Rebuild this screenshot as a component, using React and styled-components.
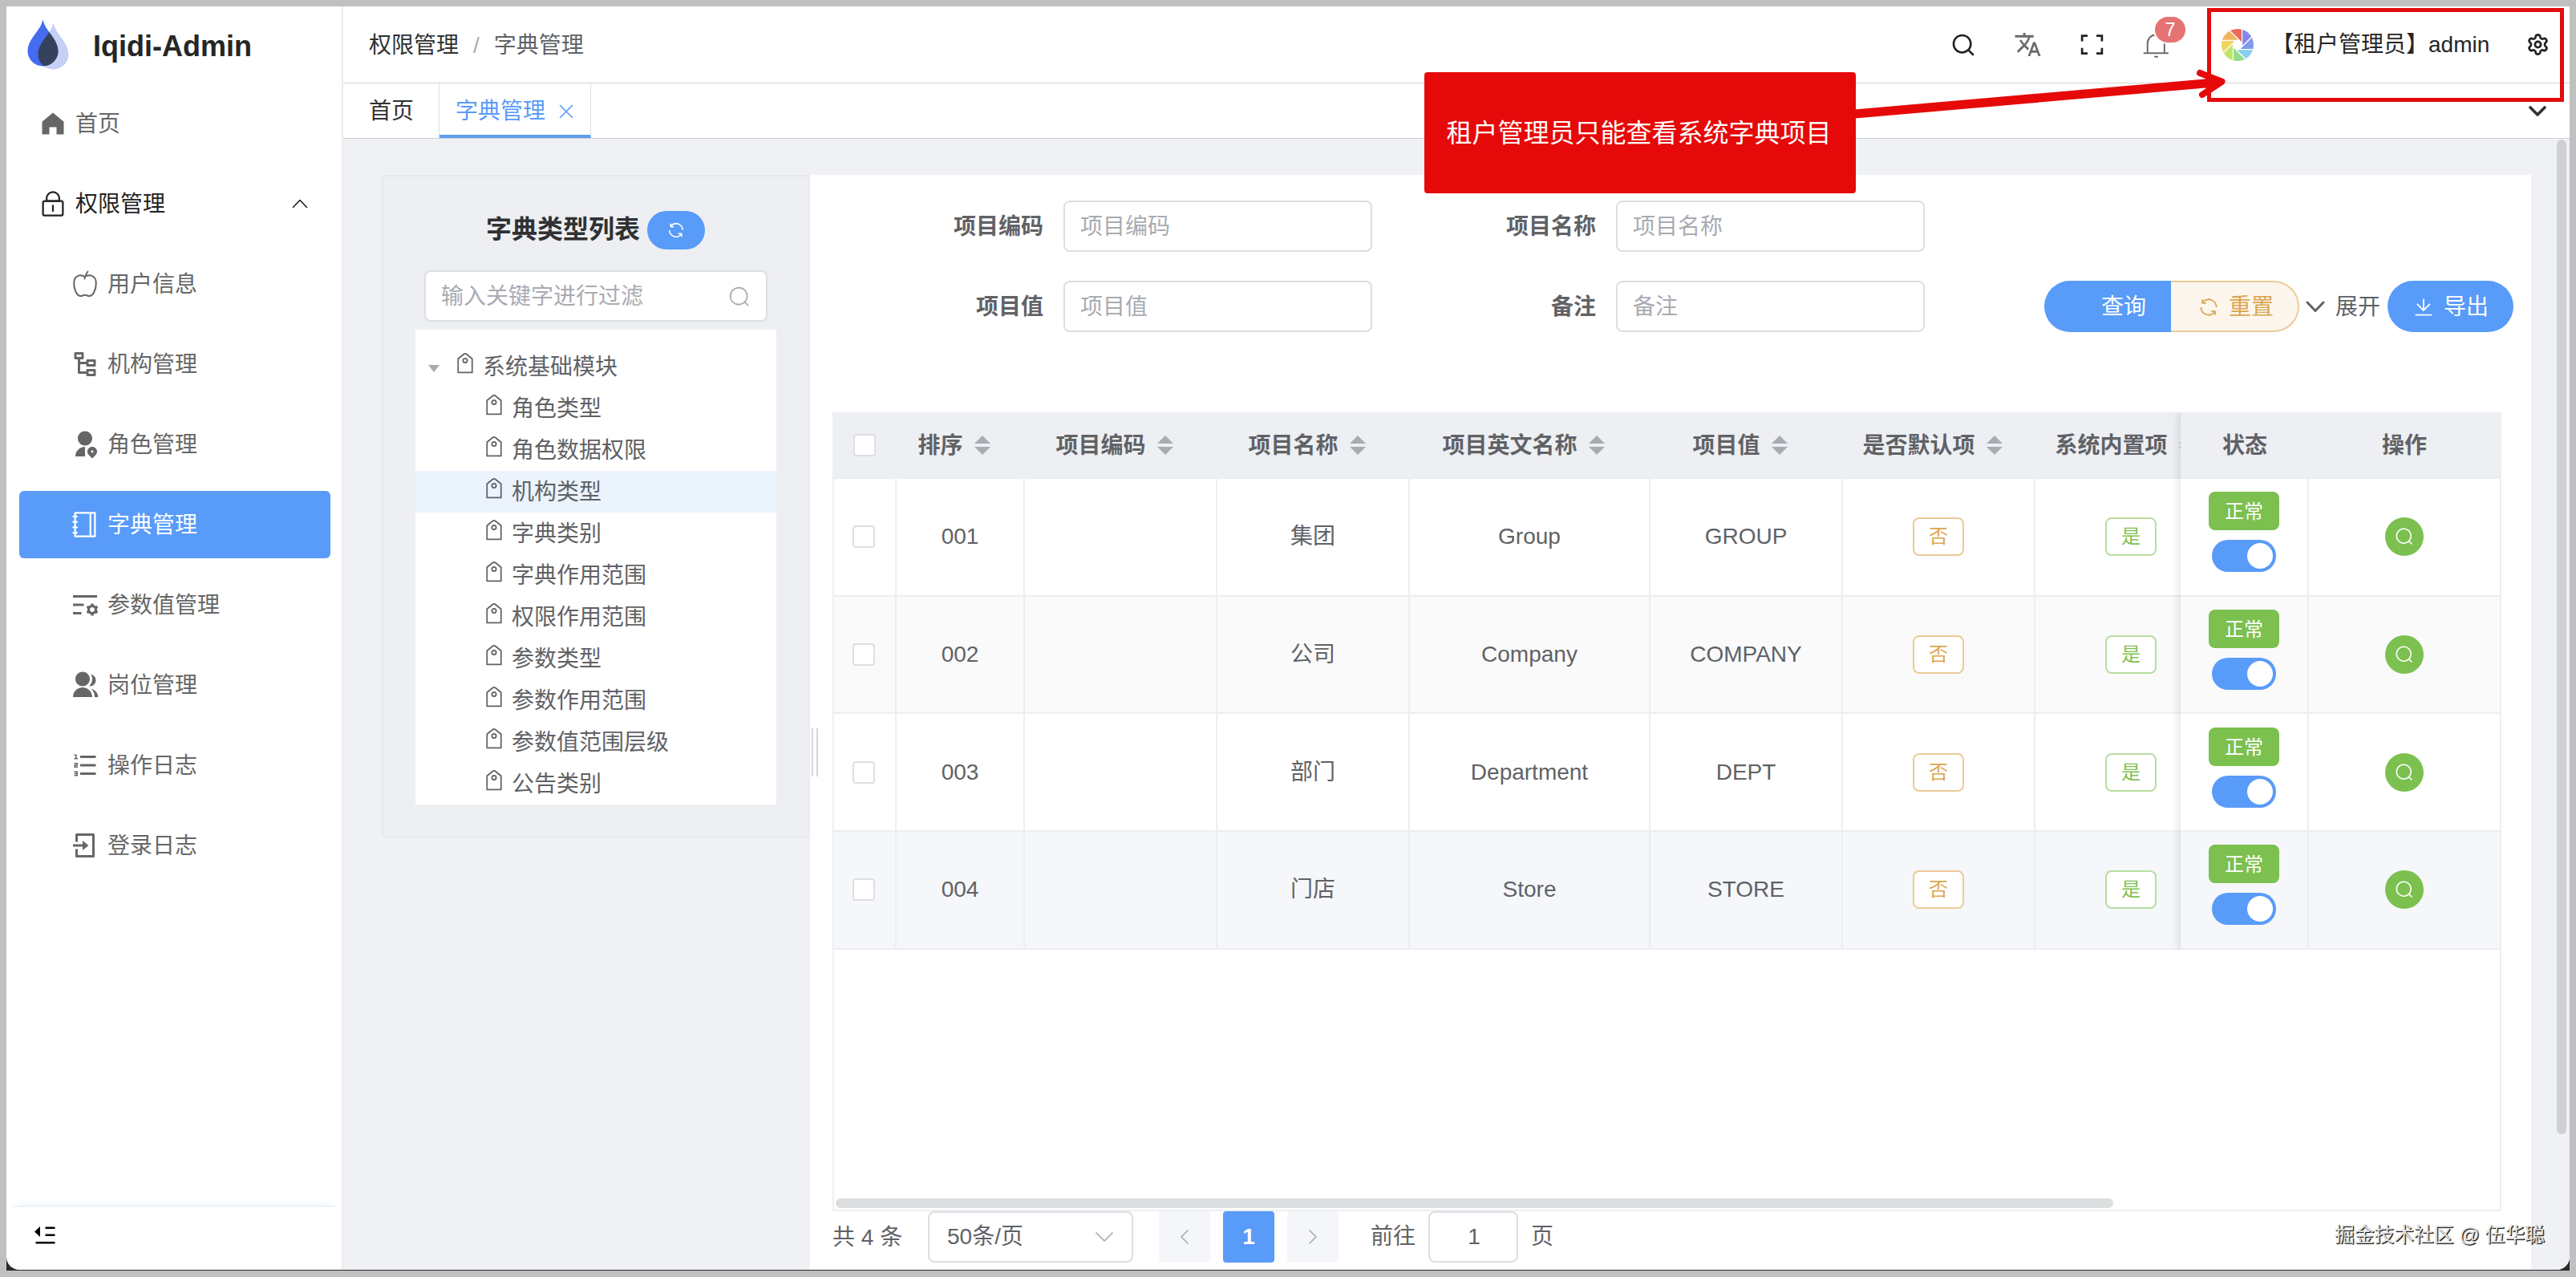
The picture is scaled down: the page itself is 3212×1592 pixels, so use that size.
import React from "react";
import styled, { createGlobalStyle, css } from "styled-components";
import {
  RiNodeTree,
  RiUserLocationFill,
  RiListSettingsLine,
  RiGroupFill,
  RiListOrdered,
  RiLoginBoxLine,
  RiSearchLine,
  RiFullscreenLine,
} from "react-icons/ri";
import { MdTranslate } from "react-icons/md";
import { Settings } from "lucide-react";

const GlobalStyle = createGlobalStyle`
  * {
    box-sizing: border-box;
  }
  body {
    margin: 0;
    background: #c0c0c0;
    color: #606266;
    font-family: "Liberation Sans", "Noto Sans CJK SC", sans-serif;
    font-size: 28px;
    line-height: 1;
  }
`;

/* ---------- icons ---------- */

const EP_PATHS = {
  home: ["M512 128 128 447.936V896h255.936V640H640v256h255.936V447.936z"],
  lock: [
    "M224 448a32 32 0 0 0-32 32v384a32 32 0 0 0 32 32h576a32 32 0 0 0 32-32V480a32 32 0 0 0-32-32zm0-64h576a96 96 0 0 1 96 96v384a96 96 0 0 1-96 96H224a96 96 0 0 1-96-96V480a96 96 0 0 1 96-96",
    "M512 544a32 32 0 0 1 32 32v192a32 32 0 1 1-64 0V576a32 32 0 0 1 32-32m192-160v-64a192 192 0 1 0-384 0v64zM512 64a256 256 0 0 1 256 256v128H256V320A256 256 0 0 1 512 64",
  ],
  notebook: [
    "M192 128v768h640V128zm-32-64h704a32 32 0 0 1 32 32v832a32 32 0 0 1-32 32H160a32 32 0 0 1-32-32V96a32 32 0 0 1 32-32",
    "M672 128h64v768h-64zM96 192h128q32 0 32 32t-32 32H96q-32 0-32-32t32-32m0 192h128q32 0 32 32t-32 32H96q-32 0-32-32t32-32m0 192h128q32 0 32 32t-32 32H96q-32 0-32-32t32-32m0 192h128q32 0 32 32t-32 32H96q-32 0-32-32t32-32",
  ],
  search: [
    "m795.904 750.72 124.992 124.928a32 32 0 0 1-45.248 45.248L750.656 795.904a416 416 0 1 1 45.248-45.248zM480 832a352 352 0 1 0 0-704 352 352 0 0 0 0 704",
  ],
  refresh: [
    "M771.776 794.88A384 384 0 0 1 128 512h64a320 320 0 0 0 555.712 216.448H654.72a32 32 0 1 1 0-64h149.056a32 32 0 0 1 32 32v148.928a32 32 0 1 1-64 0v-50.56zM276.288 295.616h92.992a32 32 0 0 1 0 64H220.16a32 32 0 0 1-32-32V178.56a32 32 0 0 1 64 0v50.56A384 384 0 0 1 896.128 512h-64a320 320 0 0 0-555.776-216.384z",
  ],
  download: [
    "M160 832h704a32 32 0 1 1 0 64H160a32 32 0 1 1 0-64m384-253.696 236.288-236.352 45.248 45.248L508.8 704 192 387.2l45.248-45.248L480 584.704V128h64z",
  ],
  tag: [
    "M224 318.336V896h576V318.336L552.512 115.84a64 64 0 0 0-81.024 0zM593.024 66.304l259.2 212.096A32 32 0 0 1 864 303.168V928a32 32 0 0 1-32 32H192a32 32 0 0 1-32-32V303.168a32 32 0 0 1 11.712-24.768l259.2-212.096a128 128 0 0 1 162.112 0",
    "M512 448a64 64 0 1 0 0-128 64 64 0 0 0 0 128m0 64a128 128 0 1 1 0-256 128 128 0 0 1 0 256",
  ],
};

const IconSvg = styled.svg`
  display: block;
  flex: none;
`;

function EpIcon({ name, size }) {
  return (
    <IconSvg viewBox="0 0 1024 1024" width={size} height={size} fill="currentColor">
      {EP_PATHS[name].map((d) => (
        <path key={d} d={d} fillRule="evenodd" />
      ))}
    </IconSvg>
  );
}

function LineIcon({ d, width, height, stroke = 2 }) {
  return (
    <IconSvg
      viewBox={`0 0 ${width} ${height}`}
      width={width}
      height={height}
      fill="none"
      stroke="currentColor"
      strokeWidth={stroke}
      strokeLinecap="round"
      strokeLinejoin="round"
    >
      <path d={d} />
    </IconSvg>
  );
}

const AppleIcon = () => (
  <LineIcon
    width={36}
    height={36}
    d="M17.5 9C13 5.500 4.500 7 4.200 16.500C4 25 8 32.400 12 33C14.500 33.300 15.500 31.800 18 31.800S21.500 33.300 24 33C28 32.400 32 25 31.800 16.500C31.500 7 23 5.500 17.500 9ZM17.500 11.500C18 8.500 19.500 5 21.500 2.500"
  />
);

const BellIcon = () => (
  <LineIcon
    width={36}
    height={36}
    d="M3.500 28.200H33M7.700 28V16.500C7.700 10 12 5.500 18 5.500S28.800 10 28.800 16.500V28M17 32.700H20"
  />
);

const DROP = "M0 0C2 14 19 24 19 40C19 50 10.500 58.500 0 58.500S-19 50-19 40C-19 24-2 14 0 0Z";

function BrandLogo() {
  return (
    <IconSvg viewBox="0 0 52 66" width="52" height="66">
      <clipPath id="drop-front">
        <path d={DROP} transform="translate(19.500 1)" />
      </clipPath>
      <path d={DROP} transform="translate(32.500 5)" fill="#c6cff4" />
      <path d={DROP} transform="translate(19.500 1)" fill="#446bf0" />
      <g clipPath="url(#drop-front)">
        <path d={DROP} transform="translate(32.500 5)" fill="#35425c" />
      </g>
    </IconSvg>
  );
}

const BLADES = ["#ec6a5e", "#8a84ee", "#7c9cea", "#84cff2", "#96db8c", "#bce56a", "#f0d45c", "#f1b45f"];

function ApertureLogo() {
  return (
    <IconSvg viewBox="-20 -20 40 40" width="40" height="40">
      <clipPath id="aperture">
        <circle r="20" />
      </clipPath>
      <g clipPath="url(#aperture)">
        {BLADES.map((color, i) => (
          <path
            key={color}
            d="M5.600 -2.300V-30H-22.100Z"
            transform={`rotate(${i * 45})`}
            fill={color}
            stroke="#fff"
            strokeWidth="1.200"
          />
        ))}
      </g>
    </IconSvg>
  );
}

/* ---------- window and sidebar ---------- */

const Screen = styled.div`
  position: relative;
  width: 3212px;
  height: 1592px;
  padding: 8px;
  overflow: hidden;
`;

const Backdrop = styled.div`
  height: 1576px;
  background: #2a2a2c;
`;

const Window = styled.div`
  display: flex;
  height: 1575px;
  border-radius: 0 0 16px 16px;
  background: #fff;
  overflow: hidden;
`;

const Sidebar = styled.aside`
  display: flex;
  flex-direction: column;
  width: 420px;
  flex: none;
  border-right: 2px solid #ebecef;
`;

const Brand = styled.div`
  display: flex;
  align-items: flex-start;
  height: 104px;
  padding: 15px 0 0 26px;
`;

const BrandName = styled.h1`
  margin: 17px 0 0 30px;
  font-size: 36px;
  line-height: 36px;
  font-weight: 700;
  color: #262626;
`;

const Menu = styled.nav`
  display: flex;
  flex-direction: column;
  gap: 16px;
  padding: 0 14px 0 16px;
  flex: 1;
`;

const MenuItem = styled.a`
  display: flex;
  align-items: center;
  gap: 10px;
  height: 84px;
  padding-left: ${(props) => (props.$child ? 64 : 24)}px;
  padding-right: 28px;
  border-radius: 6px;
  color: #666;
  ${(props) => props.$open && css`color: #222;`}
  ${(props) =>
    props.$active &&
    css`
      color: #fff;
      background: #599bf8;
    `}
`;

const MenuText = styled.span`
  flex: 1;
  padding-top: 2px;
`;

const SidebarFooter = styled.div`
  height: 80px;
  margin: 0 8px;
  padding: 23px 0 0 27px;
  border-top: 2px solid #f0f4f8;
  box-shadow: 0 -8px 8px -6px rgba(0, 90, 140, 0.07);
`;

/* ---------- header and tabs ---------- */

const Main = styled.main`
  display: flex;
  flex-direction: column;
  flex: 1;
  min-width: 0;
`;

const Header = styled.header`
  display: flex;
  align-items: center;
  height: 96px;
  flex: none;
  padding-left: 32px;
  border-bottom: 1px solid #d5d5d7;
  color: #262626;
`;

const Breadcrumb = styled.div`
  display: flex;
  align-items: center;
  gap: 18px;
  flex: 1;
  padding-top: 3px;
  color: #606266;
`;

const Crumb = styled.span`
  color: ${(props) => (props.$last ? "#606266" : "#303133")};
`;

const CrumbSlash = styled.span`
  color: #a8abb2;
`;

const Tool = styled.div`
  position: relative;
  display: flex;
  align-items: center;
  justify-content: center;
  width: 80px;
  color: ${(props) => (props.$muted ? "#6b6b6b" : "#222")};
`;

const Badge = styled.span`
  position: absolute;
  top: -17px;
  left: 39px;
  width: 38px;
  height: 32px;
  border-radius: 16px;
  background: #e57373;
  color: #fff;
  font-size: 24px;
  line-height: 32px;
  text-align: center;
  box-shadow: 0 0 0 2px #fff;
`;

const User = styled.div`
  display: flex;
  align-items: center;
  gap: 22px;
  width: 396px;
  padding-left: 42px;
  white-space: nowrap;
`;

const Tabs = styled.div`
  display: flex;
  height: 69px;
  flex: none;
  border-bottom: 1px solid #cfd0d3;
`;

const Tab = styled.div`
  display: flex;
  align-items: center;
  gap: 17px;
  padding: ${(props) => (props.$active ? "5px 21px 0 20px" : "1px 31px 0 32px")};
  border-right: 1px solid #dfe0e3;
  color: #303133;
  ${(props) =>
    props.$active &&
    css`
      color: #599bf8;
      border-bottom: 4px solid #5f9ef0;
    `}
`;

const TabMore = styled.div`
  margin: 27px 28px 0 auto;
  color: #303133;
`;

/* ---------- page body ---------- */

const Body = styled.div`
  position: relative;
  display: flex;
  align-items: flex-start;
  flex: 1;
  padding: 45px 48px 0 48px;
  background: #eff1f5;
`;

const PageScrollbar = styled.div`
  position: absolute;
  top: 1px;
  right: 4px;
  width: 12px;
  height: 1240px;
  border-radius: 6px;
  background: #cfd0d4;
`;

const TypeCard = styled.section`
  width: 534px;
  height: 826px;
  padding: 43px 40px 0;
  border: 2px solid #e6e7ec;
  border-right-color: #ebecf0;
  border-radius: 4px;
  background: #eeeff3;
`;

const TypeTitle = styled.div`
  display: flex;
  align-items: center;
  justify-content: center;
  gap: 9px;
  height: 48px;
`;

const TypeHeading = styled.h2`
  margin: -3px 0 0 -1px;
  font-size: 32px;
  line-height: 40px;
  font-weight: 700;
  color: #303133;
`;

const RefreshButton = styled.button`
  display: flex;
  align-items: center;
  justify-content: center;
  width: 72px;
  height: 48px;
  padding: 0;
  border: 0;
  border-radius: 24px;
  background: #599bf8;
  color: #fff;
`;

const Field = styled.div`
  display: flex;
  align-items: center;
  justify-content: ${(props) => (props.$center ? "center" : "space-between")};
  width: ${(props) => props.$width}px;
  height: 64px;
  flex: none;
  padding: ${(props) => (props.$filled ? "0 20px 0 22px" : "2px 19px 0 19px")};
  border: 2px solid #dcdee2;
  border-radius: 8px;
  background: #fff;
  color: ${(props) => (props.$filled ? "#606266" : "#a8abb2")};
`;

const FilterWrap = styled.div`
  margin: 26px 11px 10px;
`;

const Tree = styled.ul`
  width: 450px;
  margin: 0;
  padding: 20px 0 0;
  list-style: none;
  background: #fff;
`;

const TreeNode = styled.li`
  display: flex;
  align-items: center;
  height: 52px;
  padding-left: ${(props) => (props.$root ? 15 : 84)}px;
  background: ${(props) => (props.$active ? "#ebf3fc" : "transparent")};
`;

const TreeLabel = styled.span`
  padding-top: 2px;
`;

const Caret = styled.span`
  margin: 4px 18px 0 1px;
  border: 7px solid transparent;
  border-top: 9px solid #a8abb2;
  border-bottom: 0;
`;

const TagMark = styled.span`
  margin: -8px 8px 0 0;
`;

const Panel = styled.section`
  position: relative;
  display: flex;
  flex-direction: column;
  flex: 1;
  min-width: 0;
  height: 1365px;
  padding: 32px 22px 0 28px;
  background: #fff;
`;

const SplitHandle = styled.div`
  position: absolute;
  left: 2px;
  top: 690px;
  width: 8px;
  height: 60px;
  border: solid #d4d6da;
  border-width: 0 2px;
`;

const SearchForm = styled.div`
  display: flex;
  align-items: flex-end;
  justify-content: space-between;
`;

const FormGrid = styled.div`
  display: grid;
  grid-template-columns: 673px 673px;
  gap: 36px 16px;
`;

const FormItem = styled.label`
  display: flex;
  align-items: center;
  gap: 24px;
`;

const FormLabel = styled.span`
  width: 264px;
  padding: 2px 1px 0 0;
  text-align: right;
  font-weight: 700;
`;

const Actions = styled.div`
  display: flex;
  align-items: center;
`;

const ActionButton = styled.button`
  display: flex;
  align-items: center;
  justify-content: flex-end;
  gap: 11px;
  width: ${(props) => props.$width}px;
  height: 64px;
  padding: 1px 31px 0 0;
  border: 0;
  border-radius: ${(props) => props.$radius};
  background: #599bf8;
  color: #fff;
  font: inherit;
  white-space: nowrap;
  ${(props) =>
    props.$plain &&
    css`
      padding-right: 30px;
      border: 2px solid #ebcb96;
      border-left-width: 0;
      background: #fcf6ec;
      color: #dca550;
    `}
`;

const Toggle = styled.span`
  display: flex;
  align-items: center;
  gap: 13px;
  margin: 0 9px 0 8px;
  padding-top: 1px;
`;

/* ---------- table ---------- */

const TableBox = styled.div`
  display: flex;
  position: relative;
  width: 2081px;
  height: 996px;
  margin-top: 100px;
  border: solid #ebeef2;
  border-width: 0 2px 2px;
`;

const ScrollPart = styled.div`
  width: 1679px;
  flex: none;
  overflow: hidden;
`;

const FixedPart = styled.div`
  position: relative;
  flex: 1;
  height: 670px;
  box-shadow: -2px 0 10px rgba(0, 0, 0, 0.12);
  clip-path: inset(0 0 0 -16px);
  background: #fff;
`;

const TableRow = styled.div`
  display: grid;
  grid-template-columns: ${(props) => (props.$fixed ? "160px 238px" : "78px 160px 240px 240px 300px 240px 240px 240px")};
  width: ${(props) => (props.$fixed ? "398px" : "1738px")};
  height: 146.670px;
  background: ${(props) => props.$bg || "#fff"};
`;

const HeadRow = styled(TableRow)`
  height: 83px;
  background: #edeff3;
  color: #606266;
  font-weight: 700;
`;

const HeadCell = styled.div`
  display: flex;
  align-items: center;
  justify-content: center;
  padding: 0 ${(props) => (props.$plain ? 0 : 3)}px 0 0;
  white-space: nowrap;
  border-bottom: 2px solid #ebeef2;
`;

const HeadText = styled.span`
  padding-top: 3px;
`;

const Cell = styled.div`
  display: flex;
  align-items: center;
  justify-content: center;
  padding-right: ${(props) => (props.$check ? 2 : 0)}px;
  border-right: ${(props) => (props.$last ? 0 : 2)}px solid #ebeef2;
  border-bottom: 2px solid #ebeef2;
`;

const Sort = styled.span`
  display: flex;
  flex-direction: column;
  align-items: center;
  gap: 4px;
  width: 48px;
`;

const SortArrow = styled.i`
  border: 10px solid transparent;
  ${(props) =>
    props.$up
      ? css`
          border-top: 0;
          border-bottom-color: #a8abb2;
        `
      : css`
          border-bottom: 0;
          border-top-color: #a8abb2;
        `}
`;

const Checkbox = styled.span`
  width: 28px;
  height: 28px;
  border: 2px solid #dcdfe6;
  border-radius: 4px;
  background: #fff;
`;

const OutlineTag = styled.span`
  width: 64px;
  height: 48px;
  border: 2px solid ${(props) => (props.$yes ? "#b8dda0" : "#ebcb96")};
  border-radius: 8px;
  background: #fff;
  color: ${(props) => (props.$yes ? "#7cc04f" : "#dca550")};
  font-size: 24px;
  line-height: 44px;
  text-align: center;
`;

const StatusCell = styled(Cell)`
  flex-direction: column;
`;

const StatusTag = styled.span`
  width: 88px;
  height: 48px;
  border-radius: 8px;
  background: #7cc04f;
  color: #fff;
  font-size: 24px;
  line-height: 50px;
  text-align: center;
`;

const Switch = styled.span`
  display: flex;
  justify-content: flex-end;
  width: 80px;
  height: 40px;
  margin: 12px 0;
  padding: 4px;
  border-radius: 20px;
  background: #599bf8;

  &::after {
    content: "";
    width: 32px;
    border-radius: 50%;
    background: #fff;
  }
`;

const ViewButton = styled.button`
  display: flex;
  align-items: center;
  justify-content: center;
  width: 48px;
  height: 48px;
  padding: 0;
  border: 0;
  border-radius: 50%;
  background: #7cc04f;
  color: #fff;
`;

const TableScrollbar = styled.div`
  position: absolute;
  left: 2px;
  bottom: 2px;
  width: 1593px;
  height: 12px;
  border-radius: 6px;
  background: #dcdedf;
`;

const Pagination = styled.div`
  display: flex;
  align-items: center;
  height: 64px;
`;

const Total = styled.span`
  width: 119px;
  padding-top: 1px;
  white-space: nowrap;
`;

const PageButton = styled.button`
  display: flex;
  align-items: center;
  justify-content: center;
  width: 64px;
  height: 64px;
  margin-right: 16px;
  padding: 0;
  border: 0;
  border-radius: 4px;
  background: ${(props) => (props.$active ? "#599bf8" : "#f5f6fa")};
  color: ${(props) => (props.$active ? "#fff" : "#a8abb2")};
  font: inherit;
  font-weight: 700;
`;

const PageSize = styled.div`
  margin-right: 32px;

  svg {
    color: #a8abb2;
  }
`;

const Jumper = styled.div`
  display: flex;
  align-items: center;
  gap: 16px;
  margin-left: 24px;
`;

/* ---------- annotations on top of the page ---------- */

const Callout = styled.div`
  position: absolute;
  left: 1776px;
  top: 90px;
  width: 538px;
  height: 151px;
  padding-right: 3px;
  border-radius: 4px;
  background: #e60909;
  color: #fff;
  font-size: 32px;
  line-height: 152px;
  text-align: center;
`;

const Highlight = styled.div`
  position: absolute;
  left: 2752px;
  top: 10px;
  width: 445px;
  height: 117px;
  border: 5px solid #e10c0c;
`;

const ArrowSvg = styled.svg`
  position: absolute;
  left: 2300px;
  top: 70px;
`;

const Watermark = styled.div`
  position: absolute;
  right: 39px;
  top: 1526px;
  color: #e2e2e2;
  font-size: 24.800px;
  line-height: 28px;
  text-shadow: 1px 1px 1px #111, 1px 1px 0 #444;
`;

const MENU = [
  { label: "首页", icon: <EpIcon name="home" size={36} /> },
  { label: "权限管理", icon: <EpIcon name="lock" size={36} />, open: true },
  { label: "用户信息", icon: <AppleIcon />, child: true },
  { label: "机构管理", icon: <RiNodeTree size={36} />, child: true },
  { label: "角色管理", icon: <RiUserLocationFill size={36} />, child: true },
  { label: "字典管理", icon: <EpIcon name="notebook" size={36} />, child: true, active: true },
  { label: "参数值管理", icon: <RiListSettingsLine size={36} />, child: true },
  { label: "岗位管理", icon: <RiGroupFill size={36} />, child: true },
  { label: "操作日志", icon: <RiListOrdered size={36} />, child: true },
  { label: "登录日志", icon: <RiLoginBoxLine size={36} />, child: true },
];

const TYPES = [
  "角色类型",
  "角色数据权限",
  "机构类型",
  "字典类别",
  "字典作用范围",
  "权限作用范围",
  "参数类型",
  "参数作用范围",
  "参数值范围层级",
  "公告类别",
];

const COLUMNS = ["排序", "项目编码", "项目名称", "项目英文名称", "项目值", "是否默认项", "系统内置项"];

const ROWS = [
  { sort: "001", name: "集团", en: "Group", value: "GROUP" },
  { sort: "002", name: "公司", en: "Company", value: "COMPANY", bg: "#fafafa" },
  { sort: "003", name: "部门", en: "Department", value: "DEPT" },
  { sort: "004", name: "门店", en: "Store", value: "STORE", bg: "#f5f7fa" },
];

const FIELDS = ["项目编码", "项目名称", "项目值", "备注"];

function SideMenu() {
  return (
    <Sidebar>
      <Brand>
        <BrandLogo />
        <BrandName>Iqidi-Admin</BrandName>
      </Brand>
      <Menu>
        {MENU.map((item) => (
          <MenuItem key={item.label} $child={item.child} $active={item.active} $open={item.open}>
            {item.icon}
            <MenuText>{item.label}</MenuText>
            {item.open && <LineIcon width={20} height={12} stroke={1.6} d="M1.500 10.500L10 1.500L18.500 10.500" />}
          </MenuItem>
        ))}
      </Menu>
      <SidebarFooter>
        <IconSvg viewBox="0 0 26 24" width="26" height="24" fill="#000">
          <path d="M0 7.500L7 1V14ZM13.500 1.500H25.500V4H13.500ZM13.500 10.500H25.500V13H13.500ZM1.500 20H25.500V22.500H1.500Z" />
        </IconSvg>
      </SidebarFooter>
    </Sidebar>
  );
}

function TopBar() {
  return (
    <>
      <Header>
        <Breadcrumb>
          <Crumb>权限管理</Crumb>
          <CrumbSlash>/</CrumbSlash>
          <Crumb $last>字典管理</Crumb>
        </Breadcrumb>
        <Tool>
          <RiSearchLine size={32} />
        </Tool>
        <Tool $muted>
          <MdTranslate size={35} />
        </Tool>
        <Tool>
          <RiFullscreenLine size={33} />
        </Tool>
        <Tool $muted>
          <BellIcon />
          <Badge>7</Badge>
        </Tool>
        <User>
          <ApertureLogo />
          <span>【租户管理员】admin</span>
        </User>
        <Tool>
          <Settings size={29} strokeWidth={2.2} />
        </Tool>
      </Header>
      <Tabs>
        <Tab>首页</Tab>
        <Tab $active>
          字典管理
          <LineIcon width={18} height={18} stroke={1.6} d="M1.500 1.500L16.500 16.500M16.500 1.500L1.500 16.500" />
        </Tab>
        <TabMore>
          <LineIcon width={24} height={15} stroke={3.6} d="M3 3L12 12L21 3" />
        </TabMore>
      </Tabs>
    </>
  );
}

function TypeList() {
  return (
    <TypeCard>
      <TypeTitle>
        <TypeHeading>字典类型列表</TypeHeading>
        <RefreshButton>
          <EpIcon name="refresh" size={24} />
        </RefreshButton>
      </TypeTitle>
      <FilterWrap>
        <Field $width={428}>
          输入关键字进行过滤
          <EpIcon name="search" size={28} />
        </Field>
      </FilterWrap>
      <Tree>
        <TreeNode $root>
          <Caret />
          <TagMark>
            <EpIcon name="tag" size={28} />
          </TagMark>
          <TreeLabel>系统基础模块</TreeLabel>
        </TreeNode>
        {TYPES.map((type) => (
          <TreeNode key={type} $active={type === "机构类型"}>
            <TagMark>
              <EpIcon name="tag" size={28} />
            </TagMark>
            <TreeLabel>{type}</TreeLabel>
          </TreeNode>
        ))}
      </Tree>
    </TypeCard>
  );
}

function DictTable() {
  return (
    <TableBox>
      <ScrollPart>
        <HeadRow>
          <HeadCell>
            <Checkbox />
          </HeadCell>
          {COLUMNS.map((title) => (
            <HeadCell key={title}>
              <HeadText>{title}</HeadText>
              <Sort>
                <SortArrow $up />
                <SortArrow />
              </Sort>
            </HeadCell>
          ))}
        </HeadRow>
        {ROWS.map((row) => (
          <TableRow key={row.sort} $bg={row.bg}>
            <Cell $check>
              <Checkbox />
            </Cell>
            <Cell>{row.sort}</Cell>
            <Cell />
            <Cell>{row.name}</Cell>
            <Cell>{row.en}</Cell>
            <Cell>{row.value}</Cell>
            <Cell>
              <OutlineTag>否</OutlineTag>
            </Cell>
            <Cell>
              <OutlineTag $yes>是</OutlineTag>
            </Cell>
          </TableRow>
        ))}
      </ScrollPart>
      <FixedPart>
        <HeadRow $fixed>
          <HeadCell $plain>
            <HeadText>状态</HeadText>
          </HeadCell>
          <HeadCell $plain>
            <HeadText>操作</HeadText>
          </HeadCell>
        </HeadRow>
        {ROWS.map((row) => (
          <TableRow key={row.sort} $fixed $bg={row.bg}>
            <StatusCell>
              <StatusTag>正常</StatusTag>
              <Switch />
            </StatusCell>
            <Cell $last>
              <ViewButton>
                <EpIcon name="search" size={24} />
              </ViewButton>
            </Cell>
          </TableRow>
        ))}
      </FixedPart>
      <TableScrollbar />
    </TableBox>
  );
}

function Pager() {
  return (
    <Pagination>
      <Total>共 4 条</Total>
      <PageSize>
        <Field $width={256} $filled>
          50条/页
          <LineIcon width={28} height={14} stroke={1.7} d="M4 2L14 12L24 2" />
        </Field>
      </PageSize>
      <PageButton>
        <LineIcon width={12} height={20} stroke={1.7} d="M10 2L2 10L10 18" />
      </PageButton>
      <PageButton $active>1</PageButton>
      <PageButton>
        <LineIcon width={12} height={20} stroke={1.7} d="M2 2L10 10L2 18" />
      </PageButton>
      <Jumper>
        前往
        <Field $width={112} $filled $center>
          1
        </Field>
        页
      </Jumper>
    </Pagination>
  );
}

export default function App() {
  return (
    <Screen>
      <GlobalStyle />
      <Backdrop>
        <Window>
          <SideMenu />
          <Main>
            <TopBar />
            <Body>
              <TypeList />
              <Panel>
                <SplitHandle />
                <SearchForm>
                  <FormGrid>
                    {FIELDS.map((name) => (
                      <FormItem key={name}>
                        <FormLabel>{name}</FormLabel>
                        <Field as="span" $width={385}>
                          {name}
                        </Field>
                      </FormItem>
                    ))}
                  </FormGrid>
                  <Actions>
                    <ActionButton $width={158} $radius="32px 0 0 32px">
                      查询
                    </ActionButton>
                    <ActionButton $width={160} $radius="0 32px 32px 0" $plain>
                      <EpIcon name="refresh" size={28} />
                      重置
                    </ActionButton>
                    <Toggle>
                      <LineIcon width={24} height={15} stroke={3} d="M2 2L12 12.500L22 2" />
                      展开
                    </Toggle>
                    <ActionButton $width={157} $radius="32px">
                      <EpIcon name="download" size={28} />
                      导出
                    </ActionButton>
                  </Actions>
                </SearchForm>
                <DictTable />
                <Pager />
              </Panel>
              <PageScrollbar />
            </Body>
          </Main>
        </Window>
      </Backdrop>
      <Callout>租户管理员只能查看系统字典项目</Callout>
      <Highlight />
      <ArrowSvg viewBox="2300 70 490 90" width="490" height="90" stroke="#e60909" fill="#e60909">
        <path d="M2310 142.300L2756 103.500" strokeWidth="11" />
        <path d="M2743 91L2770.500 101.800L2746 118" strokeWidth="8" strokeLinecap="round" strokeLinejoin="round" fill="none" />
        <path d="M2750 97L2771 102L2750 110Z" stroke="none" />
      </ArrowSvg>
      <Watermark>掘金技术社区 @ 伍华聪</Watermark>
    </Screen>
  );
}
